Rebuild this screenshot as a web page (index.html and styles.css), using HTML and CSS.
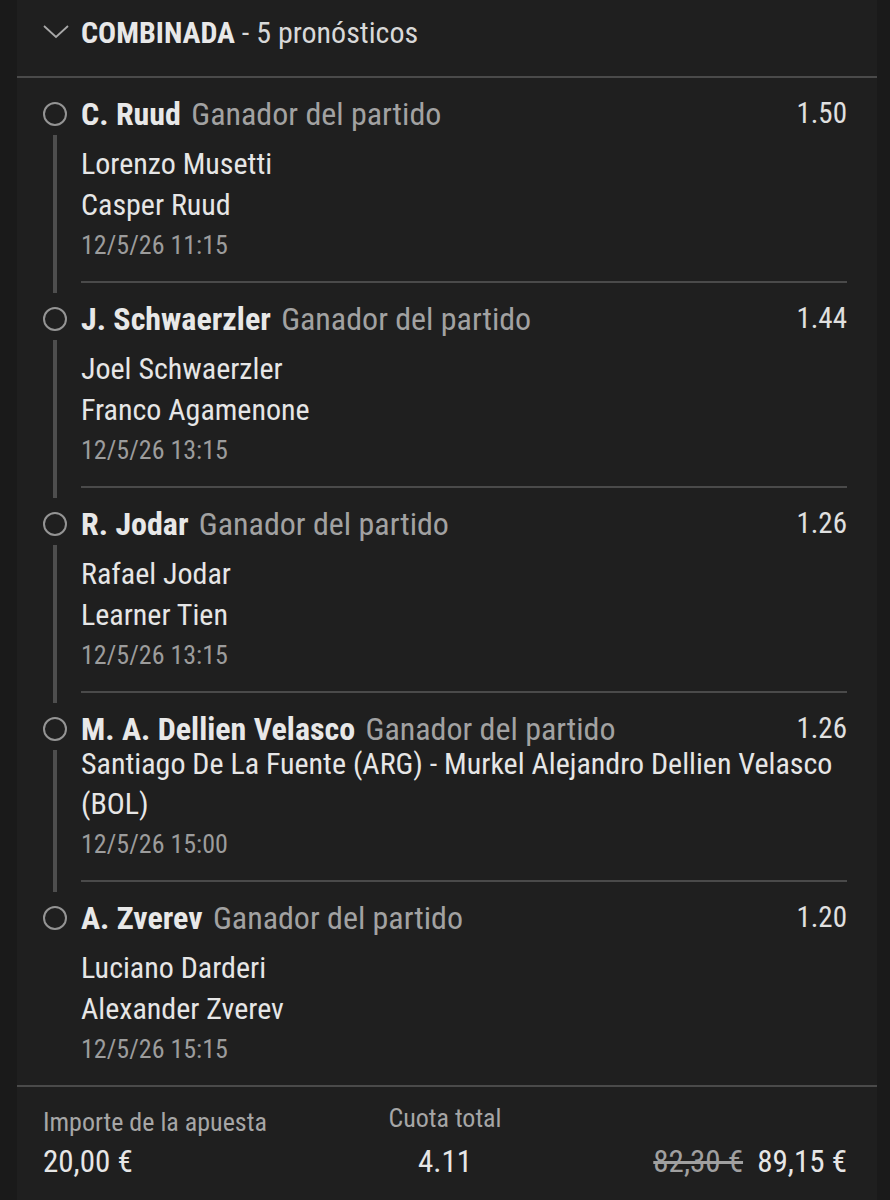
FILE: index.html
```html
<!DOCTYPE html>
<html lang="es">
<head>
    <meta charset="UTF-8">
    <meta name="viewport" content="width=device-width, initial-scale=1.0">
    <title>Combinada</title>
    <link rel="stylesheet" href="styles.css">
</head>
<body>
    <div class="card">
        <!-- cabecera -->
        <div class="header">
            <svg class="chevron" width="26" height="14" viewBox="0 0 26 14">
                <path d="M1 1 L13 12 L25 1" fill="none" stroke="#a8a8a8" stroke-width="1.8"/>
            </svg>
            <span class="bold">COMBINADA</span>&nbsp;- 5 pronósticos
        </div>

        <div class="list">
            <div class="item">
                <div class="gutter"><span class="dot"></span><span class="line"></span></div>
                <div class="content">
                    <div class="title-row">
                        <div class="title"><b>C. Ruud</b> <span class="market">Ganador del partido</span></div>
                        <div class="odd">1.50</div>
                    </div>
                    <div class="teams">
                        <div>Lorenzo Musetti</div>
                        <div>Casper Ruud</div>
                    </div>
                    <div class="date">12/5/26 11:15</div>
                </div>
            </div>

            <div class="item">
                <div class="gutter"><span class="dot"></span><span class="line"></span></div>
                <div class="content">
                    <div class="title-row">
                        <div class="title"><b>J. Schwaerzler</b> <span class="market">Ganador del partido</span></div>
                        <div class="odd">1.44</div>
                    </div>
                    <div class="teams">
                        <div>Joel Schwaerzler</div>
                        <div>Franco Agamenone</div>
                    </div>
                    <div class="date">12/5/26 13:15</div>
                </div>
            </div>

            <div class="item">
                <div class="gutter"><span class="dot"></span><span class="line"></span></div>
                <div class="content">
                    <div class="title-row">
                        <div class="title"><b>R. Jodar</b> <span class="market">Ganador del partido</span></div>
                        <div class="odd">1.26</div>
                    </div>
                    <div class="teams">
                        <div>Rafael Jodar</div>
                        <div>Learner Tien</div>
                    </div>
                    <div class="date">12/5/26 13:15</div>
                </div>
            </div>

            <div class="item">
                <div class="gutter"><span class="dot"></span><span class="line"></span></div>
                <div class="content">
                    <div class="title-row">
                        <div class="title"><b>M. A. Dellien Velasco</b> <span class="market">Ganador del partido</span></div>
                        <div class="odd">1.26</div>
                    </div>
                    <div class="event">Santiago De La Fuente (ARG) - Murkel Alejandro Dellien Velasco (BOL)</div>
                    <div class="date">12/5/26 15:00</div>
                </div>
            </div>

            <div class="item last">
                <div class="gutter"><span class="dot"></span></div>
                <div class="content">
                    <div class="title-row">
                        <div class="title"><b>A. Zverev</b> <span class="market">Ganador del partido</span></div>
                        <div class="odd">1.20</div>
                    </div>
                    <div class="teams">
                        <div>Luciano Darderi</div>
                        <div>Alexander Zverev</div>
                    </div>
                    <div class="date">12/5/26 15:15</div>
                </div>
            </div>
        </div>

        <!-- totales -->
        <div class="footer">
            <div class="col">
                <div class="label">Importe de la apuesta</div>
                <div class="value">20,00 €</div>
            </div>
            <div class="col center">
                <div class="label up">Cuota total</div>
                <div class="value">4.11</div>
            </div>
            <div class="col right">
                <div class="label">&nbsp;</div>
                <div class="value"><s class="old">82,30 €</s>&nbsp; 89,15 €</div>
            </div>
        </div>
    </div>
</body>
</html>
```

FILE: styles.css
```css
body {
    margin: 0;
    padding: 0;
    background-color: #1a1a1a;
    font-family: "Roboto Condensed", "Liberation Sans Narrow", Roboto, sans-serif;
    color: #e6e6e6;
}

.card {
    margin: 0 13px 0 17px;
    min-height: 1200px;
    background-color: #1f1f1f;
}

.header {
    display: flex;
    align-items: center;
    height: 64px;
    padding: 0 0 12px 26px;
    font-size: 30px;
    color: #d8d8d8;
    border-bottom: 2px solid #4a4a4a;
}

.chevron {
    margin-right: 12px;
}

.bold {
    font-weight: 700;
    color: #e8e8e8;
}

.item {
    display: flex;
}

.gutter {
    width: 64px;
    flex-shrink: 0;
    display: flex;
    flex-direction: column;
    align-items: center;
    padding-top: 24px;
    box-sizing: border-box;
}

.dot {
    width: 20px;
    height: 20px;
    border: 2px solid #949494;
    border-radius: 50%;
    margin-left: 12px;
}

.line {
    flex: 1;
    width: 4px;
    background-color: #4e4e4e;
    margin: 9px 0 -10px 12px;
}

.content {
    flex: 1;
    padding: 18px 0 16px;
    margin-right: 30px;
    border-bottom: 2px solid #4a4a4a;
}

.last .content {
    border-bottom: none;
}

.title-row {
    display: flex;
    justify-content: space-between;
    height: 36px;
}

.title {
    font-size: 32px;
    line-height: 36px;
}

.title b {
    color: #e8e8e8;
    margin-right: 3px;
}

.market {
    color: #a2a2a2;
}

.odd {
    font-size: 29px;
    line-height: 34px;
    color: #e0e0e0;
}

.teams {
    margin-top: 11px;
    font-size: 30px;
    line-height: 41px;
}

.event {
    margin-top: -3px;
    font-size: 30px;
    line-height: 40px;
}

.date {
    font-size: 26px;
    line-height: 40px;
    color: #9c9c9c;
}

.footer {
    display: grid;
    grid-template-columns: 1fr 1fr 1fr;
    padding: 17px 30px 0 26px;
    border-top: 2px solid #4a4a4a;
}

.label {
    font-size: 26px;
    line-height: 36px;
    color: #a6a6a6;
}

.label.up {
    margin-top: -4px;
    margin-bottom: 4px;
}

.value {
    font-size: 31px;
    line-height: 44px;
    color: #e6e6e6;
}

.center {
    text-align: center;
}

.right {
    text-align: right;
}

.old {
    color: #a0a0a0;
}
```
